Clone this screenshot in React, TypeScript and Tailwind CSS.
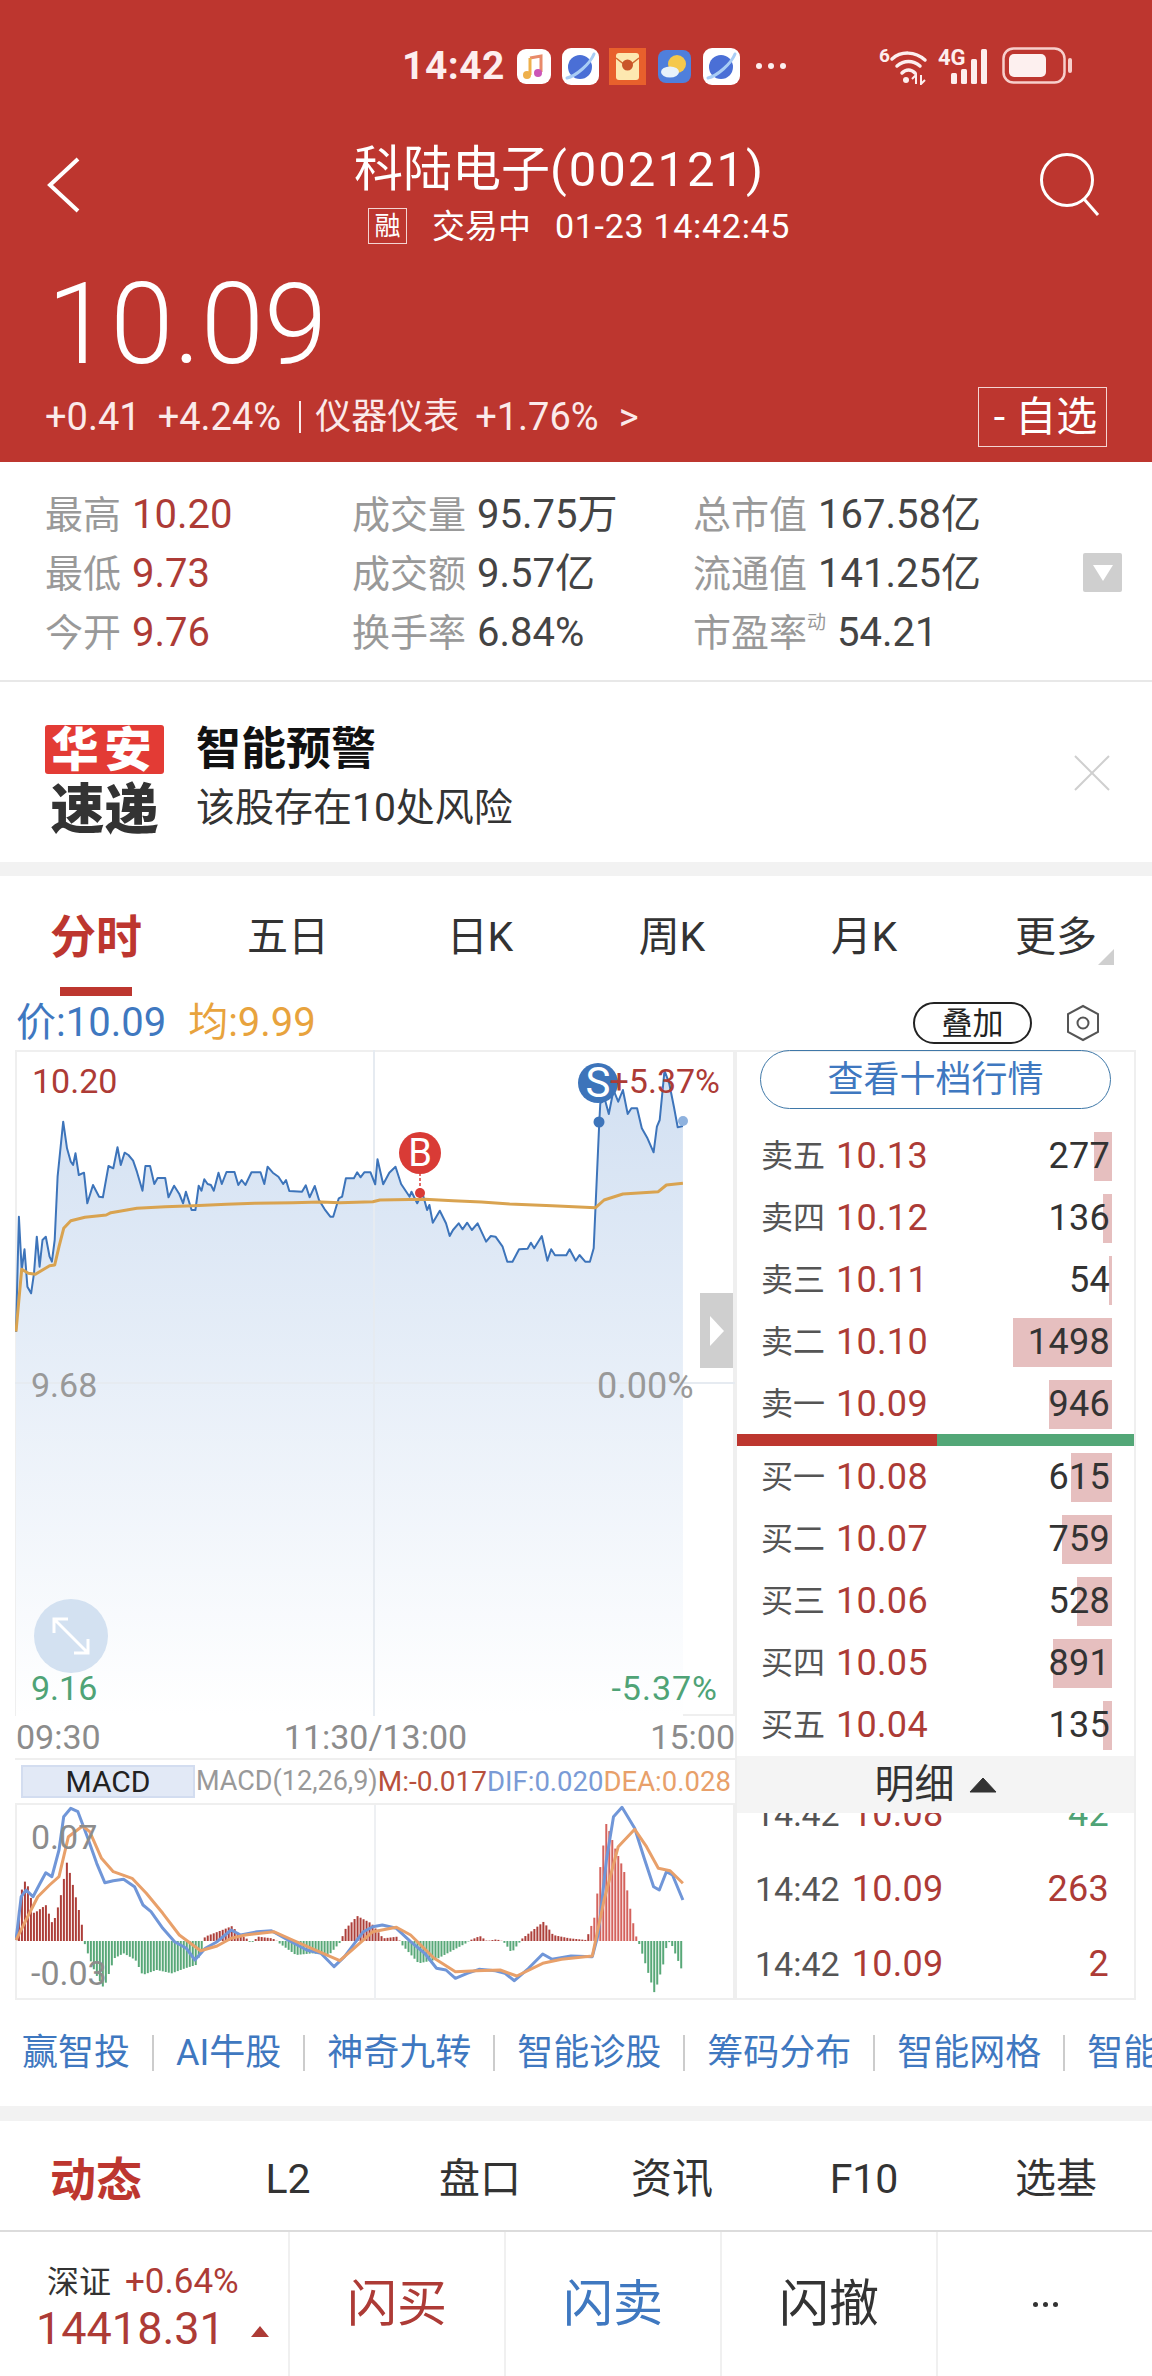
import React from "react";

type Pt = [number, number];

const PRICE: Pt[] = [[34,875],[40,530],[46,690],[52,628],[58,740],[66,760],[72,700],[78,590],[84,680],[90,600],[97,590],[105,650],[110,665],[116,600],[122,410],[134,245],[142,325],[150,365],[155,375],[160,340],[167,405],[178,398],[185,490],[197,435],[210,470],[218,472],[230,378],[240,385],[249,322],[256,375],[264,338],[272,345],[282,362],[290,395],[302,452],[308,378],[318,378],[327,432],[334,414],[350,414],[357,472],[369,437],[380,462],[388,490],[394,455],[406,510],[414,510],[421,437],[427,452],[433,418],[440,432],[447,435],[453,452],[463,398],[470,432],[480,396],[497,396],[505,435],[512,420],[520,435],[533,397],[552,397],[560,432],[567,380],[578,398],[590,410],[600,432],[606,420],[613,453],[640,455],[648,436],[656,472],[667,438],[676,480],[688,508],[700,530],[706,530],[718,475],[725,470],[733,415],[750,415],[757,397],[764,412],[772,397],[785,397],[795,433],[800,358],[812,433],[825,398],[838,380],[850,432],[868,470],[872,455],[884,490],[895,458],[905,510],[910,495],[917,548],[932,512],[945,550],[953,588],[960,570],[972,550],[980,568],[990,548],[1000,570],[1012,550],[1030,605],[1040,588],[1050,590],[1065,620],[1075,665],[1086,665],[1100,628],[1118,626],[1125,608],[1132,625],[1148,588],[1160,662],[1168,628],[1176,646],[1200,646],[1207,628],[1220,662],[1228,645],[1240,665],[1250,665],[1258,625],[1270,245],[1272,190],[1282,180],[1290,222],[1300,150],[1310,185],[1320,150],[1330,222],[1338,205],[1350,205],[1360,265],[1372,295],[1385,337],[1392,260],[1398,240],[1408,92],[1418,130],[1428,200],[1436,262],[1447,258]];

const AVG: Pt[] = [[34,875],[46,688],[60,700],[75,703],[90,690],[105,677],[116,675],[125,620],[135,565],[150,542],[180,532],[225,525],[235,518],[290,505],[350,500],[410,497],[480,493],[540,490],[620,488],[680,486],[720,488],[790,485],[805,480],[900,478],[960,482],[1020,486],[1080,492],[1170,497],[1262,503],[1280,480],[1320,462],[1395,455],[1412,435],[1447,430]];

const DIF: Pt[] = [[34,1320],[45,1190],[55,1170],[70,1190],[85,1150],[97,1118],[110,1130],[125,1050],[135,950],[150,925],[165,935],[185,1010],[205,1090],[222,1148],[240,1142],[262,1138],[285,1160],[303,1215],[320,1235],[345,1285],[370,1325],[395,1345],[413,1380],[435,1345],[460,1325],[490,1290],[510,1305],[545,1295],[575,1292],[610,1320],[650,1350],[680,1360],[708,1400],[730,1370],[770,1295],[790,1280],[810,1275],[840,1285],[870,1325],[900,1360],[925,1405],[945,1410],[965,1435],[990,1420],[1015,1408],[1050,1412],[1070,1420],[1090,1442],[1120,1405],[1150,1362],[1170,1378],[1210,1368],[1255,1370],[1268,1300],[1285,1080],[1300,950],[1318,922],[1345,985],[1365,1075],[1385,1160],[1397,1170],[1412,1115],[1425,1125],[1447,1200]];

const DEA: Pt[] = [[34,1320],[55,1260],[80,1190],[105,1155],[125,1130],[145,1010],[175,978],[190,995],[215,1075],[240,1115],[280,1135],[310,1180],[345,1240],[380,1305],[425,1352],[460,1338],[490,1315],[520,1305],[580,1295],[620,1320],[660,1345],[720,1382],[750,1345],[790,1295],[840,1282],[870,1305],[920,1375],[965,1415],[1010,1412],[1060,1410],[1095,1428],[1150,1390],[1190,1378],[1255,1368],[1280,1200],[1310,1040],[1345,988],[1370,1040],[1395,1105],[1420,1112],[1447,1150]];

const HIST: Pt[] = [[34,1323],[40,1185],[52,1140],[60,1170],[70,1240],[80,1230],[95,1215],[110,1275],[125,1200],[140,1085],[155,1170],[170,1260],[176,1323],[180,1345],[200,1420],[218,1465],[240,1375],[260,1360],[285,1380],[300,1425],[330,1410],[362,1420],[390,1405],[413,1395],[428,1340],[432,1310],[460,1295],[490,1278],[505,1305],[520,1315],[530,1330],[545,1310],[575,1315],[585,1323],[590,1330],[625,1365],[660,1360],[695,1365],[720,1325],[728,1290],[755,1248],[785,1270],[810,1315],[840,1310],[845,1323],[850,1335],[885,1390],[920,1380],[985,1330],[995,1320],[1015,1308],[1030,1323],[1050,1318],[1062,1323],[1068,1330],[1082,1358],[1100,1325],[1105,1315],[1150,1265],[1170,1305],[1205,1315],[1240,1320],[1258,1250],[1270,1100],[1283,968],[1300,1040],[1320,1110],[1335,1240],[1347,1315],[1352,1330],[1385,1480],[1405,1385],[1412,1323],[1420,1330],[1447,1425]];

const mapX = (zx: number) => zx / 2.119 - 15;
const toMain = (pts: Pt[]) => pts.map(([x, y]) => `${mapX(x).toFixed(1)},${(y / 3 - 10).toFixed(1)}`).join(" ");
const toSub = (pts: Pt[]) => pts.map(([x, y]) => `${mapX(x).toFixed(1)},${(y / 3 - 305).toFixed(1)}`).join(" ");

function histAt(x: number) {
  for (let i = 1; i < HIST.length; i++) {
    if (x <= HIST[i][0]) {
      const [x0, y0] = HIST[i - 1];
      const [x1, y1] = HIST[i];
      return y0 + ((y1 - y0) * (x - x0)) / (x1 - x0);
    }
  }
  return 1323;
}

const BARS: { x: number; y: number; h: number; c: string }[] = [];
for (let zx = 38; zx < 1448; zx += 6.35) {
  const v = histAt(zx);
  const top = Math.min(v, 1323) / 3 - 305;
  const h = Math.abs(v - 1323) / 3;
  BARS.push({ x: mapX(zx), y: top, h, c: v > 1323 ? "#58a878" : zx > 1250 ? "#d4625c" : "#ad3f3a" });
}

const ASKS = [
  { l: "卖五", p: "10.13", q: "277", w: 18 },
  { l: "卖四", p: "10.12", q: "136", w: 9 },
  { l: "卖三", p: "10.11", q: "54", w: 3 },
  { l: "卖二", p: "10.10", q: "1498", w: 99 },
  { l: "卖一", p: "10.09", q: "946", w: 63 },
];
const BIDS = [
  { l: "买一", p: "10.08", q: "615", w: 41 },
  { l: "买二", p: "10.07", q: "759", w: 50 },
  { l: "买三", p: "10.06", q: "528", w: 35 },
  { l: "买四", p: "10.05", q: "891", w: 59 },
  { l: "买五", p: "10.04", q: "135", w: 9 },
];
const TICKS = [
  { p: "10.08", q: "42", c: "text-[#4fa376]" },
  { p: "10.09", q: "263", c: "text-[#ad3b36]" },
  { p: "10.09", q: "2", c: "text-[#ad3b36]" },
];
const LINKS = ["赢智投", "AI牛股", "神奇九转", "智能诊股", "筹码分布", "智能网格", "智能"];
const CHART_TABS = ["五日", "日K", "周K", "月K"];
const BOTTOM_TABS = ["L2", "盘口", "资讯", "F10", "选基"];

function Planet() {
  return (
    <svg width="37" height="37" viewBox="0 0 37 37">
      <rect width="37" height="37" rx="9" fill="#fff" />
      <circle cx="18" cy="19" r="12" fill="#4a6fd6" />
      <path d="M5 30 C14 28 28 16 32 6" fill="none" stroke="#a9cdf5" strokeWidth="3" strokeLinecap="round" />
    </svg>
  );
}

function StatusBar() {
  return (
    <div className="flex h-[100px] items-start pl-[402px] pt-[48px]">
      <span className="w-[107px] text-[39px] leading-[37px] font-bold text-[#fdeeee] tracking-[0.5px]">14:42</span>
      <svg width="34" height="35" viewBox="0 0 34 35" className="mt-[1px] ml-[8px]">
        <rect width="34" height="35" rx="9" fill="#fff" />
        <path d="M13 9 L24 7 V23" fill="none" stroke="#e88a6a" strokeWidth="3" />
        <path d="M13 9 V26" fill="none" stroke="#eeb04c" strokeWidth="3" />
        <circle cx="10" cy="26" r="4" fill="#eeb04c" />
        <circle cx="21" cy="24" r="4" fill="#cc55b8" />
      </svg>
      <span className="ml-[11px]"><Planet /></span>
      <svg width="37" height="37" viewBox="0 0 37 37" className="ml-[10px]">
        <rect width="37" height="37" fill="#e8602c" />
        <rect x="7" y="5" width="23" height="27" rx="3" fill="#fde8b0" />
        <path d="M7 10 L18.5 19 L30 10" fill="none" stroke="#d06a30" strokeWidth="1.5" />
        <circle cx="18.5" cy="17" r="5.5" fill="#c9552a" />
      </svg>
      <svg width="33" height="33" viewBox="0 0 33 33" className="mt-[2px] ml-[12px]">
        <rect width="33" height="33" rx="8" fill="#4f7fdc" />
        <circle cx="19" cy="14" r="9" fill="#f5c84c" />
        <ellipse cx="12" cy="22" rx="9" ry="5.5" fill="#e8f2fb" />
      </svg>
      <span className="ml-[12px]"><Planet /></span>
      <span className="mt-[15px] ml-[16px] flex gap-[6px]">
        <i className="h-[6px] w-[6px] rounded-full bg-[#fdeeee]" />
        <i className="h-[6px] w-[6px] rounded-full bg-[#fdeeee]" />
        <i className="h-[6px] w-[6px] rounded-full bg-[#fdeeee]" />
      </span>
      <svg width="52" height="46" viewBox="0 -8 52 46" className="ml-[93px] -mt-[9px]">
        <text x="0" y="15" fontSize="19" fontWeight="700" fill="#fdeeee" fontFamily="Roboto">6</text>
        <path d="M13 12 C22 4 36 4 46 13 M18 19 C25 13 34 13 41 19 M23 26 C27 22 32 22 36 26" fill="none" stroke="#fdeeee" strokeWidth="3.5" strokeLinecap="round" />
        <circle cx="27" cy="33" r="3" fill="#fdeeee" />
        <path d="M37 37 V28 L33 32 M42 28 V37 L46 33" fill="none" stroke="#fdeeee" strokeWidth="2" />
      </svg>
      <svg width="55" height="46" viewBox="0 -8 55 46" className="ml-[7px] -mt-[9px]">
        <text x="0" y="18" fontSize="22" fontWeight="700" fill="#fdeeee" fontFamily="Roboto">4G</text>
        <rect x="13" y="26" width="6" height="11" rx="1.5" fill="#fdeeee" />
        <rect x="23" y="22" width="6" height="15" rx="1.5" fill="#fdeeee" />
        <rect x="33" y="12" width="6" height="25" rx="1.5" fill="#fdeeee" />
        <rect x="43" y="2" width="6" height="35" rx="1.5" fill="#fdeeee" />
      </svg>
      <svg width="72" height="38" viewBox="0 0 72 38" className="ml-[9px] -mt-[1px]">
        <rect x="1.5" y="1.5" width="61" height="34" rx="10" fill="none" stroke="#f7cfcc" strokeWidth="2.5" />
        <rect x="7" y="7" width="37" height="23" rx="5" fill="#fdf0ef" />
        <rect x="66" y="11" width="4" height="15" rx="2" fill="#f7cfcc" />
      </svg>
    </div>
  );
}

function PriceHeader() {
  return (
    <header className="h-[462px] bg-[#bd362f] text-white">
      <StatusBar />
      <div className="flex h-[112px] items-start pt-[46px] pl-[46px]">
        <svg width="34" height="56" viewBox="0 0 34 56" className="mt-[11px] shrink-0">
          <path d="M32 2 L4 28 L32 54" fill="none" stroke="#fff" strokeWidth="4" />
        </svg>
        <div className="ml-[274px] flex flex-col">
          <div className="h-[62px] text-[49px] leading-[48px] whitespace-nowrap">
            科陆电子<span className="tracking-[2px]">(002121)</span>
          </div>
          <div className="flex h-[36px] items-center whitespace-nowrap">
            <span className="ml-[14px] flex h-[36px] w-[39px] items-center justify-center border border-[#f4d4d2] text-[26px] leading-none">融</span>
            <span className="ml-[25px] text-[33px] leading-none">交易中</span>
            <span className="ml-[24px] text-[34px] leading-none tracking-[0.7px]">01-23 14:42:45</span>
          </div>
        </div>
        <svg width="64" height="64" viewBox="0 0 64 64" className="ml-auto mr-[48px] mt-[6px] shrink-0">
          <circle cx="27" cy="28" r="25.5" fill="none" stroke="#fff" strokeWidth="3" />
          <path d="M44 47 L58 63" fill="none" stroke="#fff" strokeWidth="3" />
        </svg>
      </div>
      <div className="mt-[62px] pl-[47px] text-[114px] leading-[100px] font-light whitespace-nowrap">10.09</div>
      <div className="mt-[13px] flex h-[60px] items-center justify-between pr-[45px] pl-[45px]">
        <div className="flex items-center text-[38px] leading-none whitespace-nowrap text-[#fbeaea]">
          <span>+0.41</span>
          <span className="ml-[17px]">+4.24%</span>
          <span className="ml-[18px] h-[32px] w-[2px] bg-[#fbeaea]" />
          <span className="ml-[14px] text-[36px]">仪器仪表</span>
          <span className="ml-[16px]">+1.76%</span>
          <span className="ml-[20px]">&gt;</span>
        </div>
        <div className="flex h-[60px] w-[129px] items-center justify-center border border-[#f4d4d2] pl-[6px] text-[41px] leading-none whitespace-nowrap">- 自选</div>
      </div>
    </header>
  );
}

function Stat({ label, value, red, sup }: { label: string; value: string; red?: boolean; sup?: boolean }) {
  return (
    <div className="flex h-[59px] items-center whitespace-nowrap text-[38px] leading-none">
      <span className="text-[#999]">{label}</span>
      {sup && <span className="mb-[20px] text-[19px] text-[#999]">动</span>}
      <span className={`ml-[11px] text-[40px] ${red ? "text-[#ad3b36]" : "text-[#444]"}`}>{value}</span>
    </div>
  );
}

function Stats() {
  return (
    <section className="flex h-[220px] items-start border-b-2 border-[#e8e8e8] pt-[23px] pl-[45px]">
      <div className="w-[307px]">
        <Stat label="最高" value="10.20" red />
        <Stat label="最低" value="9.73" red />
        <Stat label="今开" value="9.76" red />
      </div>
      <div className="w-[341px]">
        <Stat label="成交量" value="95.75万" />
        <Stat label="成交额" value="9.57亿" />
        <Stat label="换手率" value="6.84%" />
      </div>
      <div className="w-[390px]">
        <Stat label="总市值" value="167.58亿" />
        <Stat label="流通值" value="141.25亿" />
        <Stat label="市盈率" value="54.21" sup />
      </div>
      <div className="mt-[68px] flex h-[39px] w-[39px] items-center justify-center rounded-[2px] bg-[#cfcfcf]">
        <svg width="20" height="16" viewBox="0 0 20 16"><path d="M0 0 H20 L10 16 Z" fill="#fff" /></svg>
      </div>
    </section>
  );
}

function Alert() {
  return (
    <section className="flex h-[180px] items-start pt-[43px] pl-[45px]">
      <div className="w-[119px]">
        <div className="flex h-[49px] items-center justify-center rounded-[3px] bg-[#e33b35] text-[47px] leading-none font-black tracking-[6px] text-white">华安</div>
        <div className="mt-[16px] flex h-[42px] items-center justify-center text-[54px] leading-none font-black text-[#333]">速递</div>
      </div>
      <div className="ml-[32px]">
        <div className="h-[60px] pt-[3px] text-[45px] leading-[44px] font-bold whitespace-nowrap text-[#111]">智能预警</div>
        <div className="text-[39px] leading-[46px] whitespace-nowrap text-[#333]">该股存在10处风险</div>
      </div>
      <svg width="36" height="36" viewBox="0 0 36 36" className="mt-[30px] ml-[561px]">
        <path d="M1 1 L35 35 M35 1 L1 35" stroke="#cfcfcf" strokeWidth="2" />
      </svg>
    </section>
  );
}

function ChartTabs() {
  return (
    <section className="relative grid h-[120px] grid-cols-6 items-center text-[41px] leading-none text-[#333]">
      <div className="relative flex h-[120px] items-center justify-center pt-[2px] text-[46px] font-bold text-[#bd362f]">
        分时
        <span className="absolute bottom-0 left-[60px] h-[9px] w-[72px] bg-[#bd362f]" />
      </div>
      {CHART_TABS.map((t) => (
        <div key={t} className="flex justify-center pt-[2px]">{t}</div>
      ))}
      <div className="relative flex justify-center pt-[2px]">
        更多
        <span className="absolute right-[38px] -bottom-[7px] h-0 w-0 border-b-[16px] border-l-[16px] border-b-[#cfcfcf] border-l-transparent" />
      </div>
    </section>
  );
}

function Legend() {
  return (
    <div className="flex h-[54px] items-center pl-[16px] text-[40px] leading-none whitespace-nowrap">
      <span className="text-[#3f78c0]">价:10.09</span>
      <span className="ml-[22px] text-[#e8a33d]">均:9.99</span>
      <span className="ml-auto flex h-[42px] w-[119px] items-center justify-center rounded-full border-2 border-[#222] text-[31px] text-[#222]">叠加</span>
      <svg width="36" height="40" viewBox="0 0 36 40" className="mr-[51px] ml-[33px]">
        <path d="M18 3 L33 11 V29 L18 37 L3 29 V11 Z" fill="none" stroke="#555" strokeWidth="2" />
        <circle cx="18" cy="20" r="5.5" fill="none" stroke="#555" strokeWidth="2" />
      </svg>
    </div>
  );
}

function PriceChart() {
  return (
    <div className="relative h-[666px] border-2 border-[#efefef] text-[34px] leading-none">
      <svg viewBox="0 0 720 666" width="720" height="666" className="absolute -top-[2px] -left-[2px]">
        <defs>
          <linearGradient id="area" x1="0" y1="0" x2="0" y2="1">
            <stop offset="0" stopColor="#d2e0f2" />
            <stop offset="1" stopColor="#ffffff" />
          </linearGradient>
        </defs>
        <polygon points={`${toMain(PRICE)} 668,666 1,666`} fill="url(#area)" />
        <line x1="359" y1="0" x2="359" y2="666" stroke="#e6ebf1" strokeWidth="2" />
        <line x1="0" y1="333" x2="720" y2="333" stroke="#e6ebf1" strokeWidth="2" />
        <polyline points={toMain(PRICE)} fill="none" stroke="#3d74ba" strokeWidth="2" strokeLinejoin="round" />
        <polyline points={toMain(AVG)} fill="none" stroke="#d9a350" strokeWidth="3" strokeLinejoin="round" />
        <line x1="405" y1="123" x2="405" y2="142" stroke="#d93b36" strokeWidth="1.5" strokeDasharray="3 2" />
        <circle cx="405" cy="143" r="5" fill="#d93b36" />
        <circle cx="405" cy="103" r="21" fill="#d93b36" />
        <circle cx="584" cy="72" r="5.5" fill="#3d74ba" />
        <circle cx="668" cy="71" r="5" fill="#8fb2de" />
        <circle cx="583" cy="33" r="20" fill="#3d74ba" />
      </svg>
      <span className="absolute top-[12px] left-[15px] text-[#ad3b36]">10.20</span>
      <span className="absolute top-[12px] right-[13px] text-[#ad3b36]">+5.37%</span>
      <span className="absolute top-[81px] left-[393px] flex h-[40px] w-[20px] items-center justify-center text-[38px] text-white">B</span>
      <span className="absolute top-[13px] left-[569px] flex h-[36px] w-[24px] items-center justify-center text-[42px] text-white">S</span>
      <span className="absolute top-[316px] left-[14px] text-[#999]">9.68</span>
      <span className="absolute top-[316px] left-[580px] text-[36px] text-[#999]">0.00%</span>
      <span className="absolute top-[619px] left-[14px] text-[#4fa376]">9.16</span>
      <span className="absolute top-[619px] right-[15px] text-[#4fa376] tracking-[1px]">-5.37%</span>
      <div className="absolute top-[241px] right-0 flex h-[75px] w-[33px] items-center justify-center bg-[#cfcfcf]">
        <svg width="14" height="30" viewBox="0 0 14 30"><path d="M0 0 L14 15 L0 30 Z" fill="#fff" /></svg>
      </div>
      <div className="absolute top-[547px] left-[17px] flex h-[74px] w-[74px] items-center justify-center rounded-full bg-[#d3e1f1]">
        <svg width="42" height="42" viewBox="0 0 42 42">
          <path d="M4 4 L38 38 M4 18 V4 H18 M24 38 H38 V24" fill="none" stroke="#fff" strokeWidth="3" />
        </svg>
      </div>
    </div>
  );
}

function MacdChart() {
  return (
    <div className="relative h-[195px] border-x-2 border-b-2 border-[#efefef] text-[34px] leading-none text-[#8c8c8c]">
      <svg viewBox="0 0 720 195" width="720" height="195" className="absolute top-0 -left-[2px]">
        <line x1="360" y1="0" x2="360" y2="195" stroke="#eef0f3" strokeWidth="2" />
        {BARS.map((b) => (
          <rect key={b.x} x={b.x} y={b.y} width="2" height={b.h} fill={b.c} />
        ))}
        <polyline points={toSub(DIF)} fill="none" stroke="#7096d8" strokeWidth="3" strokeLinejoin="round" />
        <polyline points={toSub(DEA)} fill="none" stroke="#e8a06a" strokeWidth="3" strokeLinejoin="round" />
      </svg>
      <span className="absolute top-[15px] left-[14px]">0.07</span>
      <span className="absolute top-[151px] left-[14px]">-0.03</span>
    </div>
  );
}

function ChartColumn() {
  return (
    <div className="ml-[15px] w-[720px] shrink-0">
      <PriceChart />
      <div className="flex h-[42px] items-center justify-between pl-[1px] text-[34px] leading-none text-[#8c8c8c]">
        <span>09:30</span>
        <span>11:30/13:00</span>
        <span>15:00</span>
      </div>
      <div className="flex h-[47px] items-center border-y-2 border-[#efefef] pl-[6px] text-[27px] leading-none whitespace-nowrap">
        <span className="flex h-[33px] w-[174px] items-center justify-center border-2 border-[#d3ddf0] bg-[#e2e9f6] text-[30px] text-[#222]">MACD</span>
        <span className="ml-[1px] text-[#999]">MACD(12,26,9)</span>
        <span className="text-[28px] text-[#b8503c]">M:-0.017</span>
        <span className="text-[27.5px] text-[#7a9bd6]">DIF:0.020</span>
        <span className="text-[27.5px] text-[#e8a06a]">DEA:0.028</span>
      </div>
      <MacdChart />
    </div>
  );
}

function BookRow({ l, p, q, w }: { l: string; p: string; q: string; w: number }) {
  return (
    <div className="flex h-[62px] items-center pr-[22px] pl-[24px] leading-none">
      <span className="w-[64px] text-[32px] text-[#555]">{l}</span>
      <span className="ml-[11px] text-[36px] text-[#ad3b36] tracking-[0.3px]">{p}</span>
      <div className="relative ml-auto flex h-[49px] items-center text-[36px] text-[#333] tracking-[0.3px]">
        <span className="absolute top-0 right-0 h-[49px] bg-[#e6bfbf]" style={{ width: w }} />
        <span className="relative pr-[2px]">{q}</span>
      </div>
    </div>
  );
}

function OrderBook() {
  return (
    <aside className="h-[950px] w-[401px] shrink-0 border-x-2 border-b-2 border-t-2 border-[#efefef]">
      <div className="-mt-[2px] px-[23px] pb-[16px]">
        <div className="flex h-[59px] items-center justify-center rounded-full border border-[#3f78a8] text-[36px] leading-none text-[#3f78c0]">查看十档行情</div>
      </div>
      {ASKS.map((r) => <BookRow key={r.l} {...r} />)}
      <div className="-mt-[1px] flex h-[12px]">
        <span className="w-[200px] bg-[#bd362f]" />
        <span className="flex-1 bg-[#53a777]" />
      </div>
      {BIDS.map((r) => <BookRow key={r.l} {...r} />)}
      <div className="flex h-[57px] items-center justify-center gap-[14px] bg-[#f4f4f4] text-[40px] leading-none text-[#333]">
        明细
        <svg width="28" height="16" viewBox="0 0 28 16"><path d="M14 1 L27 15 H1 Z" fill="#333" stroke="#333" strokeLinejoin="round" /></svg>
      </div>
      <div className="h-[186px] overflow-hidden">
        <div className="-mt-[37px]">
          {TICKS.map((t, i) => (
            <div key={i} className="flex h-[75px] items-center pr-[25px] pl-[18px] leading-none">
              <span className="text-[34px] text-[#555]">14:42</span>
              <span className="ml-[12px] text-[36px] text-[#ad3b36] tracking-[0.3px]">{t.p}</span>
              <span className={`ml-auto text-[36px] tracking-[0.3px] ${t.c}`}>{t.q}</span>
            </div>
          ))}
        </div>
      </div>
    </aside>
  );
}

function LinkRow() {
  return (
    <div className="flex h-[106px] items-center overflow-hidden pl-[22px] text-[36px] leading-none whitespace-nowrap text-[#3f78c0]">
      {LINKS.map((t, i) => (
        <React.Fragment key={t}>
          {i > 0 && <span className="mx-[22px] h-[36px] w-[2px] shrink-0 bg-[#ccc]" />}
          <span className="shrink-0">{t}</span>
        </React.Fragment>
      ))}
    </div>
  );
}

function BottomTabs() {
  return (
    <section className="grid h-[111px] grid-cols-6 items-center border-b-2 border-[#dcdcdc] pt-[8px] text-[41px] leading-none text-[#333]">
      <div className="flex justify-center text-[46px] font-bold text-[#bd362f]">动态</div>
      {BOTTOM_TABS.map((t) => (
        <div key={t} className="flex justify-center">{t}</div>
      ))}
    </section>
  );
}

function ActionBar() {
  const cell = "flex items-center justify-center border-l-2 border-[#f0f0f0] text-[50px] leading-none";
  return (
    <section className="grid h-[144px] grid-cols-[288px_216px_216px_216px_216px]">
      <div className="pt-[32px] pl-[36px] leading-none whitespace-nowrap">
        <div className="flex items-center pl-[11px]">
          <span className="text-[32px] text-[#333]">深证</span>
          <span className="ml-[14px] text-[35px] text-[#ad3b36]">+0.64%</span>
        </div>
        <div className="mt-[7px] flex items-center text-[45px] text-[#ad3b36]">
          14418.31
          <span className="mt-[5px] ml-[26px] h-0 w-0 border-x-[9px] border-b-[11px] border-x-transparent border-b-[#ad3b36]" />
        </div>
      </div>
      <div className={`${cell} text-[#ad3b36]`}>闪买</div>
      <div className={`${cell} text-[#3f78c0]`}>闪卖</div>
      <div className={`${cell} text-[#333]`}>闪撤</div>
      <div className={`${cell} gap-[5px]`}>
        <i className="h-[5px] w-[5px] rounded-full bg-[#333]" />
        <i className="h-[5px] w-[5px] rounded-full bg-[#333]" />
        <i className="h-[5px] w-[5px] rounded-full bg-[#333]" />
      </div>
    </section>
  );
}

export default function App() {
  return (
    <div className="h-[2376px] w-[1152px] overflow-hidden bg-white font-[family-name:Roboto,'Noto_Sans_CJK_SC',sans-serif]">
      <PriceHeader />
      <Stats />
      <Alert />
      <div className="h-[14px] bg-[#f2f2f2]" />
      <ChartTabs />
      <Legend />
      <div className="flex">
        <ChartColumn />
        <OrderBook />
      </div>
      <LinkRow />
      <div className="h-[15px] bg-[#f2f2f2]" />
      <BottomTabs />
      <ActionBar />
    </div>
  );
}
